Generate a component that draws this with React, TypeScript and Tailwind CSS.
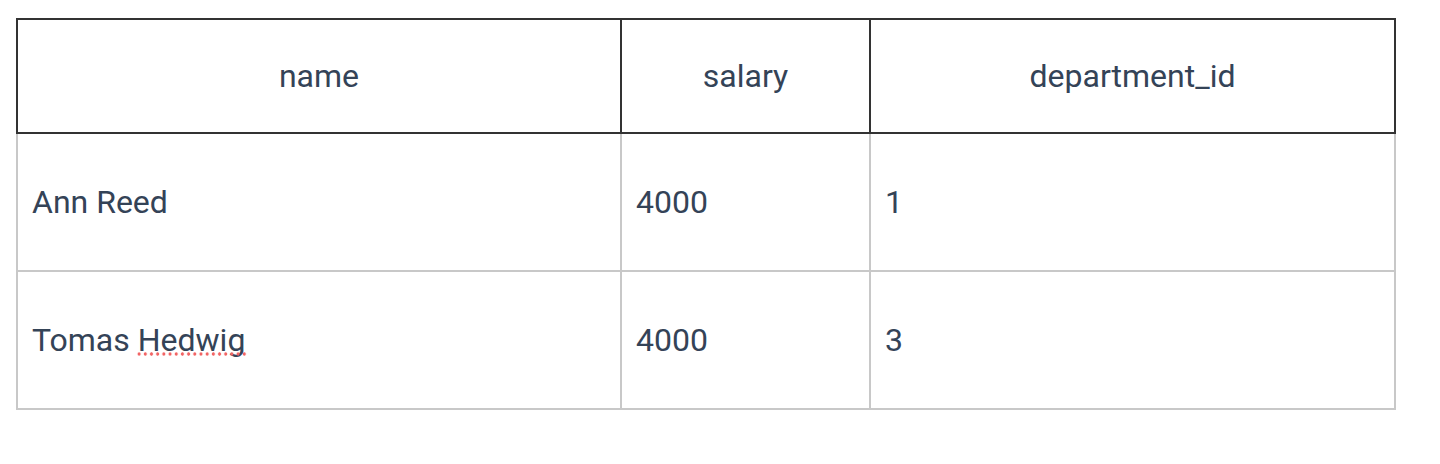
export default function App() {
  const rows = [
    { name: "Ann Reed", salary: "4000", dept: "1", spell: false },
    { name: "Tomas Hedwig", salary: "4000", dept: "3", spell: true },
  ];
  return (
    <div className="w-[1440px] h-[464px] bg-white pt-[18px] pl-[16px]" style={{ fontFamily: "Roboto, 'Noto Sans', sans-serif" }}>
      <table className="border-collapse w-[1378px] text-[32px] text-[#344357] table-fixed">
        <colgroup>
          <col className="w-[604px]" />
          <col className="w-[249px]" />
          <col className="w-[525px]" />
        </colgroup>
        <thead>
          <tr className="h-[114px]">
            <th className="border-2 border-[#333333] font-normal text-center align-middle">name</th>
            <th className="border-2 border-[#333333] font-normal text-center align-middle">salary</th>
            <th className="border-2 border-[#333333] font-normal text-center align-middle">department_id</th>
          </tr>
        </thead>
        <tbody>
          {rows.map((r) => (
            <tr key={r.name} className="h-[138px]">
              <td className="border-2 border-[#c8c8c8] pl-[14px] pr-4 align-middle">
                {r.spell ? (
                  <>
                    Tomas{" "}
                    <span className="relative inline-block">
                      Hedwig
                      <span className="absolute left-[-2px] right-[-2px] top-[36px] h-[4px] bg-[radial-gradient(circle,#f26464_1.4px,transparent_1.9px)] bg-[length:6.2px_4px] bg-repeat-x" />
                    </span>
                  </>
                ) : (
                  r.name
                )}
              </td>
              <td className="border-2 border-[#c8c8c8] pl-[14px] pr-4 align-middle">{r.salary}</td>
              <td className="border-2 border-[#c8c8c8] pl-[14px] pr-4 align-middle">{r.dept}</td>
            </tr>
          ))}
        </tbody>
      </table>
    </div>
  );
}
